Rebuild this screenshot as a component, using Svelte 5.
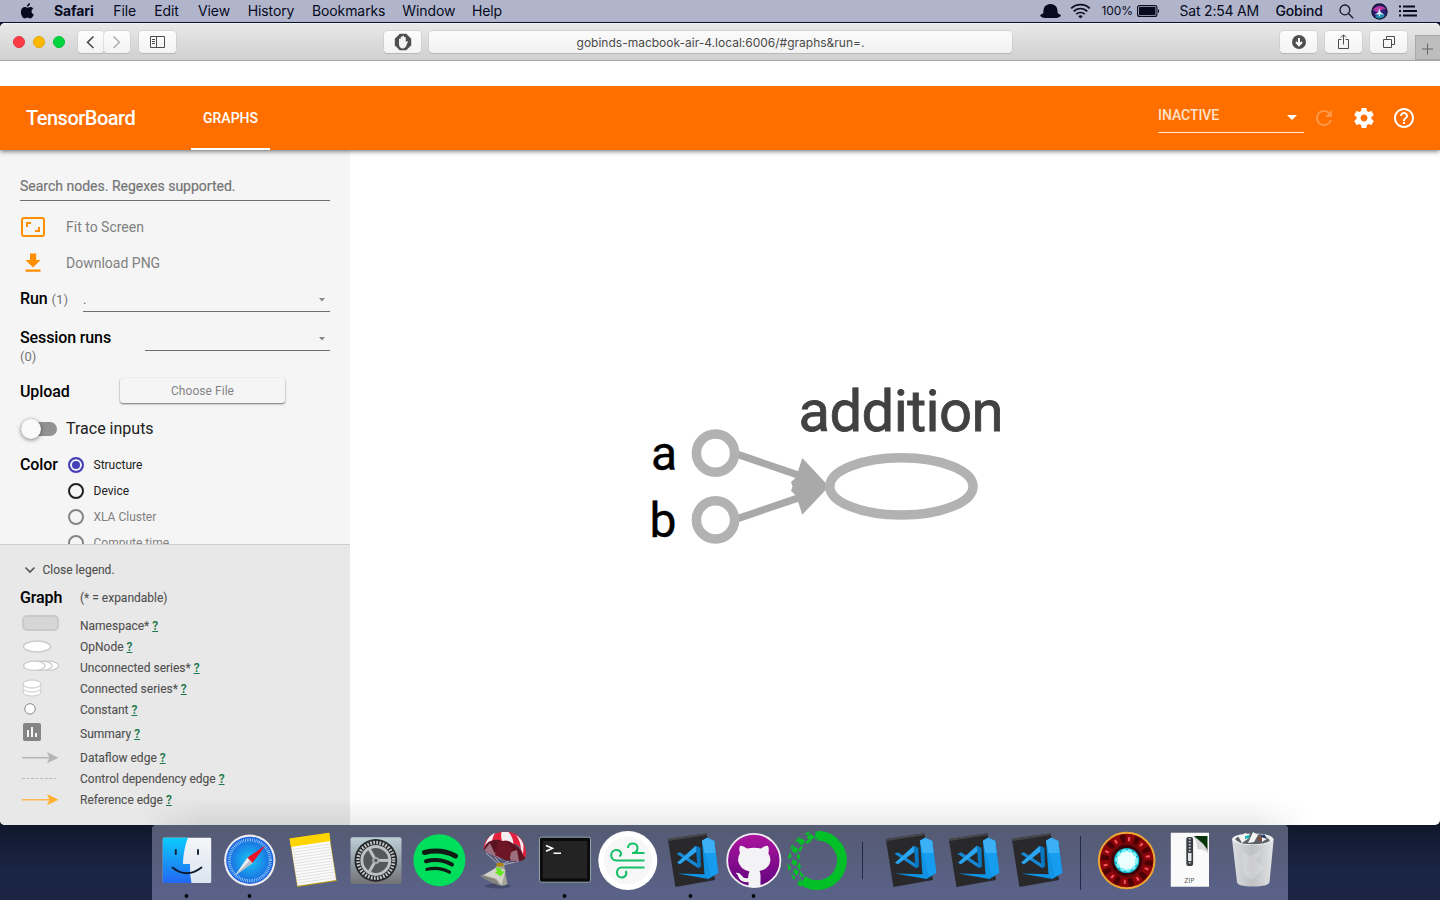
<script>
  const menus = [
    ['Safari', 59.3], ['File', 41], ['Edit', 43.7], ['View', 49.7], ['History', 64.3],
    ['Bookmarks', 90.3], ['Window', 69.7], ['Help', 40]
  ];
  const colors = [
    ['Structure', 'on'], ['Device', ''], ['XLA Cluster', 'off'], ['Compute time', 'off']
  ];
  const legend = [
    ['Namespace*', 'namespace', 21], ['OpNode', 'op', 21], ['Unconnected series*', 'series', 21],
    ['Connected series*', 'stack', 21], ['Constant', 'constant', 21], ['Summary', 'summary', 27],
    ['Dataflow edge', 'flow', 21], ['Control dependency edge', 'control', 21], ['Reference edge', 'reference', 21]
  ];
  const apps = [
    'finder', 'safari', 'notes', 'settings', 'music', 'parachute', 'terminal', 'wind', 'code', 'git', 'ring',
    '|', 'code', 'code', 'code', '||', 'reactor', 'zip', 'trash'
  ];
  const running = [0, 1, 6, 8, 9];
  const spokes = (n) => Array.from({ length: n }, (_, i) => (i * 360) / n);
</script>

{#snippet code()}
  <path d="M8.8 14 47.5 8.2 56 55 16.4 62z" fill="#29292b" />
  <path d="M9 14 47.5 8.2 48 10 9.4 16z" fill="#47474a" />
  <path d="M43 15.7 48.2 12.7 55.2 16 59.3 47.7 49.5 54 18.2 48.6 45.5 49.3z" fill="#0f93e2" />
  <path d="M43 15.7 48.2 12.7 55.2 16 59.3 47.7 52 52z" fill="#169df0" />
  <path d="M48.2 12.7 55.2 16 56.5 28 45.5 28 43 15.7z" fill="#3cb0f4" />
  <path d="M17.500 28.700 21 27.200 41 40.500 39 43z" fill="#1488d5" />
  <path d="M18 37.800 36.700 20.800 41.200 23.200 38.500 26 21 39.300z" fill="#2aa5ef" />
  <path d="M36.700 20.800 41.400 23 42 41.700 38.600 43.200z" fill="#0878c3" />
{/snippet}

<div class="desktop">
  <header class="menubar">
    <svg class="apple" width="15" height="18" viewBox="0 0 15 18"><path d="M10 1c.1 2-1.3 3.700-3 3.700C6.800 3 8.300 1.300 10 1zM7.300 5.700c.7 0 1.500-.8 3-.8 1.300 0 2.400.7 3 1.600-2.600 1.500-2.200 5 .5 6-.7 1.900-2 3.900-3.500 3.900-1.100 0-1.600-.7-2.900-.7s-1.800.7-2.800.7C2.700 16.400.9 12.900.9 10c0-3.200 2-5 4-5 1.100 0 1.900.7 2.400.7z" /></svg>
    {#each menus as [label, width], i}
      <span class="menu" class:bold={i === 0} style="width:{width}px">{label}</span>
    {/each}
    <div class="tray">
      <svg width="21" height="16" viewBox="0 0 21 16"><path d="M.3 12c.9-.8 2.300-1.300 3.100-1.700C2.900 5.500 5 1 10.500 1s7.600 4.500 7.100 9.300c.8.400 2.200.9 3.100 1.700.6 1.500-1.700 2.500-4 3H4.300c-2.300-.5-4.600-1.500-4-3z" /></svg>
      <svg class="wifi" width="21" height="16" viewBox="0 0 21 16"><g fill="none" stroke="#070a20" stroke-width="1.700"><path d="M1.200 5.400a13.500 13.500 0 0 1 18.600 0M3.700 8.300a9.700 9.700 0 0 1 13.600 0M6.300 11.200a6 6 0 0 1 8.400 0" /></g><path d="M8.300 13.300a3.300 3.300 0 0 1 4.400 0L10.500 15.600z" /></svg>
      <span class="percent">100%</span>
      <svg class="battery" width="23" height="12" viewBox="0 0 23 12"><rect x=".6" y=".6" width="19.300" height="10.800" rx="2" fill="none" stroke="#070a20" stroke-width="1.100" /><rect x="2" y="2" width="16.500" height="8" rx=".6" /><path d="M21 4c1.500.5 1.500 3.500 0 4z" /></svg>
      <span class="clock">Sat 2:54 AM</span>
      <span class="user">Gobind</span>
      <svg class="find" width="15" height="15" viewBox="0 0 15 15"><g fill="none" stroke="#15182c" stroke-width="1.300"><circle cx="5.900" cy="5.900" r="4.900" /><path d="m9.500 9.500 4.700 4.700" /></g></svg>
      <svg class="siri" width="17" height="17" viewBox="0 0 17 17"><circle cx="8.500" cy="8.500" r="8.200" fill="#131236" /><circle cx="8.500" cy="8.500" r="6.800" fill="#2a2075" /><path d="M2 7c3-5 10-5 13-1-4 0-5 1-7 4z" fill="#b8359f" /><path d="M4 14c2-1 3-5 4-7 2 3 5 4 6 6-3 3-7 3-10 1z" fill="#1d8cae" /><path d="m8 5 1.500 4 4 3-4-1-1 3-1-3-4 1 4-3z" fill="#dde9ff" /></svg>
      <svg class="list" width="18" height="12" viewBox="0 0 18 12"><path d="M0 .5h2v2H0zM0 5h2v2H0zM0 9.500h2v2H0zM4 .5h12v2H4zM4 5h14v2H4zM4 9.500h14v2H4z" /></svg>
    </div>
  </header>

  <main class="window">
    <div class="toolbar">
      <div class="lights"><i class="red"></i><i class="yellow"></i><i class="green"></i></div>
      <div class="nav">
        <button aria-label="Back"><svg width="26" height="22" viewBox="0 0 26 22"><path d="m15.500 5.500-6 5.800 6 5.700" stroke-width="1.600" /></svg></button>
        <button aria-label="Forward"><svg width="26" height="22" viewBox="0 0 26 22"><path d="m9.500 5.500 6 5.800-6 5.700" class="pale" stroke-width="1.400" /></svg></button>
      </div>
      <button class="wide" aria-label="Sidebar"><svg width="38" height="22" viewBox="0 0 38 22"><path d="M11.500 5.500h14v11h-14zM17.500 5.500v11M13 8.500h3M13 10.500h3M13 12.500h3" stroke-width="1" /></svg></button>
      <button class="wide block" aria-label="Content blocker"><svg width="38" height="22" viewBox="0 0 38 22"><path d="M15.700 2.800h6.600l4.900 4.900v6.600l-4.900 4.900h-6.600l-4.900-4.900V7.700z" class="solid" /><path d="M15 10.500V8q.9-1 1.700 0V6q.9-1 1.700 0V5q.9-1 1.700 0v1.500q.9-1 1.700 0V11l1.400-1q1 .3.500 1.300l-2 4.700q-1.500 2-4.200 1.300-2.500-.8-2.500-3.500z" class="palm" /></svg></button>
      <div class="address"><span>gobinds-macbook-air-4.local:6006/#graphs&amp;run=.</span></div>
      <div class="actions">
        <button class="wide" aria-label="Downloads"><svg width="38" height="22" viewBox="0 0 38 22"><circle cx="19" cy="11" r="7" class="solid" /><path d="M19 7v7m-3-3 3 3.300 3-3.300" class="white" stroke-width="1.900" /></svg></button>
        <button class="wide" aria-label="Share"><svg width="38" height="22" viewBox="0 0 38 22"><path d="M16.500 8.500h-3v9h10v-9h-3M18.500 13.500V4M15.800 6.500l2.700-2.700 2.700 2.700" stroke-width="1" /></svg></button>
        <button class="wide" aria-label="Tabs"><svg width="38" height="22" viewBox="0 0 38 22"><path d="M13.500 8.500h8v8h-8zM16.500 8V5.500h8v8H22" stroke-width="1" /></svg></button>
      </div>
      <div class="plus"><svg width="25" height="25" viewBox="0 0 25 25"><path d="M12.500 7.500v11M7 13h11" /></svg></div>
    </div>

    <div class="blank"></div>

    <div class="appbar">
      <h1>TensorBoard</h1>
      <div class="tab">GRAPHS</div>
      <div class="select"><span>INACTIVE</span><svg width="10" height="5" viewBox="0 0 10 5"><path d="M0 0h10L5 5z" /></svg></div>
      <svg class="tool faded" width="24" height="24" viewBox="0 0 24 24"><path d="M17.650 6.350A7.958 7.958 0 0 0 12 4c-4.420 0-7.990 3.580-7.990 8s3.570 8 7.990 8c3.730 0 6.840-2.550 7.730-6h-2.080A5.990 5.990 0 0 1 12 18c-3.310 0-6-2.690-6-6s2.690-6 6-6c1.660 0 3.140.69 4.220 1.780L13 11h7V4z" /></svg>
      <svg class="tool" width="24" height="24" viewBox="0 0 24 24"><path d="M19.430 12.980c.04-.32.070-.64.070-.98s-.03-.66-.07-.98l2.110-1.650c.19-.15.240-.42.120-.64l-2-3.460c-.12-.22-.39-.3-.61-.22l-2.490 1c-.52-.4-1.080-.73-1.690-.98l-.38-2.650A.488.488 0 0 0 14 2h-4c-.25 0-.46.180-.49.420l-.38 2.650c-.61.250-1.170.59-1.690.98l-2.490-1c-.23-.09-.49 0-.61.220l-2 3.460c-.13.220-.07.490.120.640l2.110 1.650c-.04.320-.07.650-.07.980s.03.660.070.980l-2.110 1.650c-.19.150-.24.420-.12.640l2 3.460c.12.220.39.3.61.220l2.490-1c.52.4 1.080.73 1.690.98l.38 2.650c.03.240.24.420.49.420h4c.25 0 .46-.18.49-.42l.38-2.650c.61-.25 1.170-.59 1.690-.98l2.490 1c.23.09.49 0 .61-.22l2-3.460c.12-.22.07-.49-.12-.64zM12 15.500c-1.930 0-3.500-1.570-3.500-3.500s1.570-3.500 3.500-3.500 3.500 1.570 3.500 3.500-1.570 3.500-3.500 3.500z" /></svg>
      <svg class="tool" width="24" height="24" viewBox="0 0 24 24"><path d="M11 18h2v-2h-2v2zm1-16C6.480 2 2 6.480 2 12s4.480 10 10 10 10-4.480 10-10S17.520 2 12 2zm0 18c-4.410 0-8-3.590-8-8s3.590-8 8-8 8 3.590 8 8-3.590 8-8 8zm0-14c-2.210 0-4 1.790-4 4h2c0-1.100.9-2 2-2s2 .9 2 2c0 2-3 1.750-3 5h2c0-2.250 3-2.500 3-5 0-2.210-1.790-4-4-4z" /></svg>
    </div>

    <div class="body">
      <aside>
        <section class="controls">
          <div class="search">Search nodes. Regexes supported.</div>
          <div class="command"><svg width="26" height="24" viewBox="0 0 26 24"><path d="M4 3h18q2 0 2 2v14q0 2-2 2H4q-2 0-2-2V5q0-2 2-2z" fill="none" stroke="#ff8f00" stroke-width="2" /><path d="M6 12V7h5v2H8v3zM20 12v5h-5v-2h3v-3z" fill="#ff8f00" /></svg><span>Fit to Screen</span></div>
          <div class="command second"><svg width="26" height="24" viewBox="0 0 26 24"><path d="M20.500 9h-4.300V2.500H10V9H5.500l7.500 7.500zM5.500 18.500v2.300h15v-2.300z" fill="#ff8f00" /></svg><span>Download PNG</span></div>
          <div class="field"><b>Run</b><small>(1)</small><div class="picker run"><span>.</span><svg width="6" height="4" viewBox="0 0 6 4"><path d="M0 0h6L3 3.500z" /></svg></div></div>
          <div class="field session"><b>Session runs</b><div class="picker"><svg width="6" height="4" viewBox="0 0 6 4"><path d="M0 0h6L3 3.500z" /></svg></div></div>
          <div class="zero">(0)</div>
          <div class="upload"><b>Upload</b><button>Choose File</button></div>
          <div class="trace"><span class="switch"><i></i></span><span class="label">Trace inputs</span></div>
          <div class="colors"><b>Color</b>
            <div>
              {#each colors as [name, state]}
                <div class="radio {state}"><i></i><span>{name}</span></div>
              {/each}
            </div>
          </div>
        </section>
        <section class="legend">
          <div class="close"><svg width="12" height="8" viewBox="0 0 12 8"><path d="m1.500 1.500 4.500 4.500 4.500-4.500" fill="none" stroke="#555" stroke-width="1.600" /></svg><span>Close legend.</span></div>
          <div class="caption"><b>Graph</b><span>(* = expandable)</span></div>
          {#each legend as [label, icon, height]}
            <div class="entry" style="height:{height}px">
              <svg width="60" height="27" viewBox="0 0 60 27">
                {#if icon === 'namespace'}
                  <rect x="3" y="4" width="35" height="14" rx="4" fill="#d6d6d6" stroke="#c9c9c9" stroke-width="1.800" />
                {:else if icon === 'op'}
                  <ellipse cx="17" cy="13.500" rx="13.600" ry="5.400" fill="#fff" stroke="#ccc" stroke-width="1.500" />
                {:else if icon === 'series'}
                  <g fill="#fff" stroke="#c9c9c9" stroke-width="1.200"><ellipse cx="28" cy="11.800" rx="10.500" ry="4.600" /><ellipse cx="21.500" cy="11.800" rx="10.500" ry="4.600" /><ellipse cx="14.300" cy="11.800" rx="10.700" ry="4.600" /></g>
                {:else if icon === 'stack'}
                  <g fill="#fff" stroke="#c9c9c9"><ellipse cx="12" cy="17" rx="9" ry="4" /><ellipse cx="12" cy="13" rx="9" ry="4" /><ellipse cx="12" cy="9" rx="9" ry="4" /></g>
                {:else if icon === 'constant'}
                  <circle cx="10" cy="12.900" r="5.200" fill="#fff" stroke="#888" />
                {:else if icon === 'summary'}
                  <rect x="3" y="3" width="18" height="18" rx="1.800" fill="#848484" /><path d="M7 10h2v7H7zM11 7h2v10h-2zM15 13h2v4h-2z" fill="#f5f5f5" />
                {:else if icon === 'control'}
                  <path d="M2 13.500h36" stroke="#bbb" stroke-dasharray="3 1.500" />
                {:else}
                  <g class:amber={icon === 'reference'} class="edge"><path d="M2 13.700h28" stroke-width="1.500" /><path d="M27 8 38.500 13.700 27 19.300 29.500 13.700z" class="tip" /></g>
                {/if}
              </svg>
              <span>{label} <u>?</u></span>
            </div>
          {/each}
        </section>
      </aside>
      <svg class="graph" width="1090" height="675" viewBox="350 150 1090 675">
        <path d="M738 454.500 804 477M738 518.500 804 496" stroke="#a9a9a9" stroke-width="7.200" />
        <path d="M802.300 458 828 485.500v2L802.300 514.700 796 495.500 791 491 792.500 486.500 791 482 796 477.500z" fill="#a9a9a9" />
        <g fill="#fff" stroke="#b2b2b2" stroke-width="9.500"><circle cx="715.500" cy="453.200" r="19.100" /><circle cx="715.500" cy="519.800" r="19.100" /><ellipse cx="901.400" cy="486.400" rx="71.600" ry="28.700" /></g>
        <text x="798.500" y="431.400" font-size="58" textLength="205" class="name">addition</text>
        <text x="651" y="469.700" font-size="48" class="leaf">a</text>
        <text x="649.500" y="537" font-size="48" class="leaf">b</text>
      </svg>
      <div class="haze"></div>
    </div>
  </main>

  <footer class="dock">
    {#each apps as app, i}
      {#if app === '|'}
        <div class="gap short"><i></i></div>
      {:else if app === '||'}
        <div class="gap"><i></i></div>
      {:else}
        <svg width="63" height="75" viewBox="0 0 63 75">
          {#if app === 'finder'}
            <defs><linearGradient id="fa" x2="0" y2="1"><stop stop-color="#0bcbfb" /><stop offset="1" stop-color="#2467f3" /></linearGradient><linearGradient id="fb" x2="0" y2="1"><stop stop-color="#f5f6f8" /><stop offset="1" stop-color="#dbe5f0" /></linearGradient></defs>
            <rect x="7.800" y="12.800" width="48.400" height="45.200" rx="1.200" fill="url(#fb)" />
            <path d="M9 12.800h24C30 20 28.300 30 28 39h7q-.5 10 1.500 19H9q-1.200 0-1.200-1.200V14q0-1.200 1.200-1.200z" fill="url(#fa)" />
            <path d="M20.800 25v4M43 25v4" stroke="#16263f" stroke-width="2" stroke-linecap="round" /><path d="M17.500 42.500q14 11.500 29 0" fill="none" stroke="#0c1a2d" stroke-width="1.800" stroke-linecap="round" />
          {:else if app === 'safari'}
            <defs><radialGradient id="sa"><stop stop-color="#18c8f5" /><stop offset="1" stop-color="#1b62df" /></radialGradient></defs>
            <circle cx="31.800" cy="35.300" r="25.700" fill="#ececf0" /><circle cx="31.800" cy="35.300" r="23.600" fill="url(#sa)" />
            <circle cx="31.800" cy="35.300" r="20.500" fill="none" stroke="#b8e6fb" stroke-width="3.200" stroke-dasharray=".6 1.190" />
            <path d="M47.500 20.300 34.500 38 29.300 32.800z" fill="#ec1124" /><path d="M29.300 32.800 34.500 38 17 50.500z" fill="#eee" /><path d="M31.900 35.400 34.500 38 17 50.500z" fill="#b8bcc5" />
          {:else if app === 'notes'}
            <path d="M8.500 13.500 48.200 7.800 55.800 56 16.200 62z" fill="#b69824" /><path d="M9 14 47.700 8.500 55 55 16.500 60.700z" fill="#fbfbfb" />
            <g stroke="#dadada" stroke-width=".8">{#each spokes(13) as _, n}<path d="M{11 + n * .45} {24.500 + n * 2.800} {49.500 + n * .45} {19 + n * 2.800}" />{/each}</g>
            <path d="M8.500 13.500 48.200 7.800 49.500 16 10 22z" fill="#ffd500" />
          {:else if app === 'settings'}
            <defs><linearGradient id="ga" x2="0" y2="1"><stop stop-color="#bdd0d8" /><stop offset="1" stop-color="#727376" /></linearGradient></defs>
            <rect x="6.500" y="12.200" width="51" height="46.800" rx="2" fill="url(#ga)" /><circle cx="31.800" cy="35.400" r="21.300" fill="#222426" />
            <circle cx="31.800" cy="35.400" r="17.800" fill="none" stroke="#c5c8ca" stroke-width="3.500" stroke-dasharray="1.700 1.407" />
            <circle cx="31.800" cy="35.400" r="14" fill="#55575a" stroke="#bec0c2" stroke-width="3" />
            {#each [0, 120, 240] as a}<path d="M32 35.400h14" transform="rotate({a} 31.800 35.400)" stroke="#bdbfc1" stroke-width="3" />{/each}
            <circle cx="31.800" cy="35.400" r="3.500" fill="#aaacaf" /><circle cx="31.800" cy="35.400" r="1.600" fill="#555" />
          {:else if app === 'music'}
            <circle cx="32.400" cy="35.200" r="26" fill="#00df5b" /><g fill="none" stroke="#111b16" stroke-linecap="round"><path d="M17.500 27.500q17-4 31 3.500" stroke-width="5" /><path d="M19 36.300q14-3.500 26 3.300" stroke-width="4" /><path d="M20 44.300q12.500-2.800 22.500 2.800" stroke-width="3.200" /></g>
          {:else if app === 'parachute'}
            <ellipse cx="28" cy="61" rx="13" ry="2.500" fill="#30364f" opacity=".5" />
            <path d="M16 28 28 39M25 32l5 7M49 36l-16 4M39 36l-8 4" stroke="#c2c2d0" stroke-width=".8" />
            <path d="M13.800 24Q18 16 22 15c12-3 26 2 33.500 18q-3 4-7.500 3-4 1.500-8-.5-5 .5-9-3-6 1-9.500-3.500-5 0-7.700-5z" fill="#5c1322" />
            <path d="M14.500 25 20 18l5 11-3 .500Q17 29 14.500 25zM22 30l5-4 4 9-3-2zM41 36l-3-8 9-3 2 11z" fill="#d4b9c8" opacity=".55" />
            <path d="M25 30l3-13 9-1 5 8-3 12-8-3z" fill="#6d1625" />
            <path d="M13.800 24C13.500 13 24 6 37.800 6.700 52 8 58 23 55.500 33Q52 30 51 24q-3-5-7.500-5Q38 14 32 16q-6-3-11 0-5 1.500-7.200 8z" fill="#e4213c" />
            <path d="M17.500 14.500q3-5 7.500-6.500-2 3-3 7.500-4 .5-7 5 .500-3 2.500-6zM31.500 7l7 0Q43 12 43.500 19 38 14 32 16q-1.500-5-.5-9zM46 10q5 3 7.300 9 .5 6-.5 10-1-3-1.800-5-.5-8-5-14z" fill="#f4eef1" />
            <path d="M28 39q3-1.500 6 0 1 9 3.500 20-4 3-9 1-9-3-18-9Q23 48 28 39z" fill="#a5a49c" /><path d="m27.500 42-14 8 13 4 5 6 4-15z" fill="#d3d2cb" /><path d="m11 50 14 4 5 6Q20 58 10.500 51z" fill="#83827c" />
            <path d="M26.500 38.500q4-1.500 7 0v3h-7z" fill="#b18214" />
            <path d="m26 42 5 1.500 .8 3 3-.3-4 5.300-6-4 2-1z" fill="#67e723" />
          {:else if app === 'terminal'}
            <rect x="6.500" y="12.200" width="51" height="45" rx="2" fill="#0a0a0a" stroke="#91a5ad" stroke-width="1" /><rect x="9.700" y="16" width="44.500" height="37.500" fill="#232323" />
            <path d="m13 20.500 6.500 2.800-6.500 3M20.500 28.300h7.500" fill="none" stroke="#fff" stroke-width="1.500" />
          {:else if app === 'wind'}
            <circle cx="31.800" cy="35.500" r="29.500" fill="#fff" /><circle cx="31.800" cy="35.500" r="24" fill="#f7f7f7" /><g fill="none" stroke="#16bf6a" stroke-width="2.100"><path d="M48.500 35.500H20.500c-7 0-7-10.500 0-10.500 5 0 6 6 2.500 6M48.500 28H36M32 23c0-6 9.500-6 9.500 0 0 3-2 5-5.500 5M48.500 42.500H25.500c-6 0-6 10 0 10 4 0 6-4 4-6.500" /></g>
          {:else if app === 'code'}
            {@render code()}
          {:else if app === 'git'}
            <defs><linearGradient id="gh" x2="0" y2="1"><stop stop-color="#ad159f" /><stop offset="1" stop-color="#61047e" /></linearGradient></defs>
            <circle cx="31.800" cy="35.400" r="26.600" fill="url(#gh)" stroke="#f1eef3" stroke-width="1.800" />
            <path d="M18 21q2-1 7 2.500 7-1.500 14 0 5-3.500 7-2.500 1.500 3 .3 7.200Q48.500 31 48.500 35q-1 9-11 11 1.200 2 1 6v9q-6 2-12 0v-4q-8 1-10-5-.8-2.800-3-4 4-1 6.500 3 2 3 6 2 .2-4 1.500-6.500-10-2.500-11.500-11 0-4.500 2-7.500Q16.500 24 18 21z" fill="#f3f3f5" />
          {:else if app === 'ring'}
            <path d="M32.200 10.600a24.700 24.700 0 1 1-14.500 44.700" fill="none" stroke="#03bf28" stroke-width="9.800" />
            <path d="m30.500 6 4 4-4.500 5z" fill="#03bf28" />
            <g fill="#03bf28"><path d="m25 8.500 5 3.500-4 3-4.500-2zM16 13l4 3-3 4.500-4.500-3zM9 21l4 3-1.500 5-5-3zM8 34l4.500 2.500-2 4.500-4-2.500zM10 43.500l4 3-2 4.500-4-4z" /><path d="m19 9 6-3-2 4.500zM9.500 16.500l5-5v4.500zM4.500 25l3-6 1 3zM2.500 34l2.500-7 2 5zM2.500 38l4 5-3 3zM6 48l4.500 4.500-2 3zM12 59l4-6 .5 9z" /><path d="m20 17 4-3 3 2-5 3zM13 25l3-4 2 1-3 5zM11.500 32l2-4 2 4-2 3zM12 42l2-5 2 5-1.500 3zM14.500 51l1-5 4 6z" /></g>
          {:else if app === 'reactor'}
            <circle cx="30.700" cy="35.500" r="27.800" fill="#8c0509" stroke="#eda634" stroke-width="2" />
            <circle cx="30.700" cy="35.500" r="22" fill="none" stroke="#4b0004" stroke-width="8" stroke-dasharray="5 8.820" />
            <circle cx="30.700" cy="35.500" r="21.500" fill="none" stroke="#f4555f" stroke-width="4" stroke-dasharray="2 11.510" stroke-dashoffset="-7.500" />
            <circle cx="30.700" cy="35.500" r="16.300" fill="#3b0006" stroke="#68080f" stroke-width="2" /><circle cx="30.700" cy="35.500" r="12.600" fill="#13b6ce" /><circle cx="30.700" cy="35.500" r="10" fill="#ecffff" stroke="#7df4f7" stroke-width="3" stroke-dasharray="4 2" />
          {:else if app === 'zip'}
            <path d="M11.800 7.800H50v54H11.800z" fill="#fafafa" /><path d="M35 11h13.500V26z" fill="#063409" /><path d="M31 9.500q7 3 7.500 15 7-1 11.500 5-3-12-19-20z" fill="#d7d7da" />
            <rect x="27.300" y="12" width="6.800" height="29" rx="2" fill="#393c42" /><path d="M30.700 13v26" stroke="#c2c6cc" stroke-width="2" stroke-dasharray="1.500 1.500" /><path d="M29 28h3.500v8H29z" fill="#e3e5e6" /><text x="25.300" y="58.300" font-size="7" class="ziptext">ZIP</text>
          {:else if app === 'trash'}
            <defs><linearGradient id="tr"><stop stop-color="#d9dce0" /><stop offset=".5" stop-color="#bfc0c3" /><stop offset="1" stop-color="#e3e4e6" /></linearGradient></defs>
            <path d="M10 14q21-5 41.700 0L47.500 57q-1 4.500-16.500 4.500T15 57z" fill="url(#tr)" /><path d="M10 14Q12 8.500 31 8.500T51.500 14Q49 20 31 20T10 14z" fill="#eceded" />
            <path d="m13 14 7-5 6 3 3-5 5 3 5-1 7 4 2 3q-8 4-22 3-9 0-13-5z" fill="#5d6268" /><path d="m16 11 8-3 3 5-7 5zM31 7l5 3-4 7-6 1zM40 11l6 2-6 4z" fill="#f5f5f3" /><path d="m23 11 5-1-1 3-4 1z" fill="#1ab7bd" /><path d="m36 11 4 3-3 3z" fill="#8f482f" /><path d="m42 9 3 5-6-2z" fill="#223a68" />
            <path d="m20 27 7 4 12-5-5 10 8 7-12 12-8-5z" fill="#e4e4e5" opacity=".35" />
          {/if}
          {#if running.includes(i)}<circle cx="31.500" cy="71" r="1.900" fill="#030409" />{/if}
        </svg>
      {/if}
    {/each}
  </footer>
</div>

<style>
  :global(body) { margin: 0; overflow: hidden; }
  .desktop { width: 1440px; height: 900px; box-sizing: border-box; overflow: hidden; background: linear-gradient(#0a1230 0, #0a1230 820px, #10182c 826px, #1a2444 870px, #1a2342); font-family: Roboto, sans-serif; display: flex; flex-direction: column; }
  .desktop * { box-sizing: border-box; }
  svg { display: block; flex: none; }
  button { font: inherit; padding: 0; }
  .menubar { height: 22px; margin-bottom: 1px; flex: none; background: #b0b5cc; color: #070a20; display: flex; align-items: center; padding-left: 20px; font: 14px/22px Inter, sans-serif; }
  .menubar svg { fill: #070a20; }
  .apple { margin-right: 19px; }
  .menu { flex: none; white-space: nowrap; letter-spacing: -.1px; }
  .bold { font-weight: 700; letter-spacing: -.12px; }
  .tray { margin-left: auto; width: 400.500px; flex: none; display: flex; align-items: center; white-space: nowrap; }
  .wifi { margin-left: 9px; }
  .percent { font-size: 12px; width: 32px; margin-left: 11px; letter-spacing: -.1px; }
  .battery { margin-left: 3px; }
  .clock { width: 80px; margin-left: 20px; letter-spacing: -.2px; }
  .user { width: 48px; margin-left: 16px; font-weight: 500; letter-spacing: -.15px; }
  .find { margin-left: 15px; }
  .siri { margin-left: 17px; }
  .list { margin-left: 11px; }

  .window { height: 802px; flex: none; border-radius: 5px; overflow: hidden; background: #fff; display: flex; flex-direction: column; }
  .toolbar { height: 38px; flex: none; display: flex; align-items: flex-start; padding: 7px 0 0 13px; background: linear-gradient(#e8e8e8, #d0d0d0); border-bottom: 1px solid #a5a5a5; border-top: 1px solid #f3f3f3; }
  .toolbar svg { fill: none; stroke: #4c4c4c; }
  .lights { display: flex; gap: 8px; padding-top: 5px; width: 65px; }
  .lights i { width: 12px; height: 12px; border-radius: 50%; }
  .red { background: #fc3d47; border: 1px solid #e5333e; } .yellow { background: #fdb900; border: 1px solid #e5a400; } .green { background: #00d540; border: 1px solid #00bd35; }
  .nav { display: flex; }
  .toolbar button { height: 22px; width: 26px; border: 0; border-radius: 4px; background: linear-gradient(#fdfdfd, #f3f3f3); box-shadow: 0 0 0 .5px #c5c5c5, 0 1px 0 #aaa; }
  .toolbar button.wide { width: 37px; }
  .toolbar .pale { stroke: #aaa; }
  .nav + .wide { margin-left: 9px; }
  .toolbar button.block { margin-left: 208px; }
  .toolbar .solid { fill: #4f4f4f; stroke: none; }
  .toolbar .palm { fill: #f2f2f2; stroke: none; }
  .toolbar .white { stroke: #fff; }
  .address { margin-left: 8px; width: 583px; height: 22px; border-radius: 4px; background: linear-gradient(#fbfbfb, #f2f2f2); box-shadow: 0 0 0 .5px #c5c5c5, 0 1px 0 #aaa; text-align: center; font: 12px/23px Inter, sans-serif; color: #4a4a4a; }
  .actions { display: flex; gap: 8px; margin-left: 268px; }
  .plus { margin-left: auto; margin-top: 4px; border: 1px solid #a9a9a9; border-right: 0; background: #bdbdbd; width: 25px; height: 25px; }
  .plus svg { stroke: #666; margin-left: -1px; }
  .blank { height: 25px; flex: none; background: #fff; position: relative; z-index: 3; }
  .appbar { height: 64px; flex: none; background: #ff6f00; color: #fff; display: flex; align-items: center; padding-left: 26px; box-shadow: 0 1px 5px rgba(0, 0, 0, .6); position: relative; z-index: 2; }
  h1 { font-size: 20px; font-weight: 500; margin: 0; width: 165px; letter-spacing: -.5px; }
  .tab { width: 79px; height: 64px; line-height: 64px; border-bottom: 2px solid #fff; text-align: center; font-size: 14px; font-weight: 500; }
  .select { margin-left: 888px; width: 146px; height: 34px; margin-bottom: 5px; border-bottom: 1px solid #ffe9d9; font-size: 14px; display: flex; justify-content: space-between; align-items: center; padding-right: 7px; color: #ffe1ca; font-weight: 500; letter-spacing: -.05px; }
  .select svg { fill: #fff; margin-top: 5px; }
  .tool { fill: #fff; margin-left: 16px; }
  .faded { opacity: .28; margin-left: 8px; }

  .body { display: flex; flex: 1; position: relative; }
  aside { width: 350px; height: 675px; flex: none; display: flex; flex-direction: column; background: #f5f5f5; }
  .controls { height: 394px; overflow: hidden; padding: 22px 20px 0; }
  .search { height: 29px; line-height: 29px; border-bottom: 1px solid #6f6f6f; color: #757575; font-size: 14px; -webkit-text-stroke: .2px; }
  .command { height: 36px; margin-top: 8px; display: flex; align-items: center; color: #808080; font-size: 14px; }
  .command.second { margin-top: 0; }
  .command span { margin-left: 20px; }
  b { font-size: 16px; font-weight: 500; color: #000; letter-spacing: -.12px; white-space: nowrap; }
  .field { height: 36px; display: flex; align-items: center; }
  .field b, .caption b { margin-top: -1px; }
  .field small { font-size: 13.300px; color: #757575; margin-left: 4px; }
  .picker { margin-left: auto; width: 185px; height: 24px; border-bottom: 1px solid #6f6f6f; margin-bottom: -2px; display: flex; align-items: center; justify-content: flex-end; padding-right: 5px; fill: #888; }
  .picker.run { width: 247px; justify-content: space-between; font-size: 13px; color: #666; }
  .session { margin-top: 3px; }
  .zero { height: 18px; line-height: 18px; margin-top: -8px; font-size: 13px; color: #757575; }
  .upload { height: 28px; margin-top: 11px; display: flex; align-items: center; }
  .upload b { width: 100px; }
  .upload button { width: 165px; height: 25px; border: 0; border-radius: 3px; background: #f5f5f5; color: #858585; box-shadow: 0 1px 2px rgba(0, 0, 0, .55); font-size: 12px; letter-spacing: .05px; margin-top: -1px; }
  .trace { height: 37px; margin-top: 5px; display: flex; align-items: center; font-size: 16px; color: #212121; }
  .switch { width: 36px; height: 14px; border-radius: 7px; margin-left: 1px; background: #929292; display: flex; align-items: center; }
  .switch i { width: 20px; height: 20px; flex: none; border-radius: 50%; background: #fafafa; box-shadow: 0 1px 4px rgba(0, 0, 0, .5); }
  .label { margin-left: 9px; }
  .colors { display: flex; margin-top: 5px; }
  .colors b { width: 48px; line-height: 26px; }
  .radio { height: 26px; display: flex; align-items: center; font-size: 12px; color: #212121; }
  .radio i { width: 16px; height: 16px; border: 2px solid #212121; border-radius: 50%; margin-right: 9.500px; }
  .radio.on i { border-color: #4540b8; background: #4540b8; box-shadow: inset 0 0 0 2px #f5f5f5; }
  .radio.off { color: #808080; }
  .radio.off i { border-color: #858585; }
  .legend { height: 281px; border-top: 1px solid #ccc; background: #e8e8e8; padding: 12px 20px 0; color: #4f4f4f; font-size: 12px; -webkit-text-stroke: .1px; }
  .close { height: 26px; display: flex; align-items: center; gap: 6.500px; padding-left: 4px; }
  .caption { height: 30px; display: flex; align-items: center; }
  .caption b { width: 60px; }
  .entry { display: flex; align-items: center; }
  .entry:nth-child(3) { margin-top: 2px; }
  .entry u { color: #18764a; font-weight: 500; }
  .edge path { stroke: #b5b5b5; } .edge .tip { fill: #b5b5b5; stroke: none; }
  .amber path { stroke: #ffb74d; } .amber .tip { fill: #ffb02e; }
  .graph { font-family: Roboto, sans-serif; }
  .name { fill: #414141; stroke: #414141; stroke-width: .8; }
  .leaf { fill: #000; stroke: #000; stroke-width: .4; }
  .haze { position: absolute; left: 140px; right: 130px; bottom: 0; height: 28px; background: linear-gradient(transparent, rgba(0, 0, 0, .08)); -webkit-mask-image: linear-gradient(90deg, transparent, #000 60px, #000 calc(100% - 60px), transparent); mask-image: linear-gradient(90deg, transparent, #000 60px, #000 calc(100% - 60px), transparent); }
  .dock { width: 1136px; height: 75px; flex: none; margin: 0 auto; padding-left: 3px; display: flex; background: linear-gradient(#555b72, #5a628a); border-radius: 4px 4px 0 0; }
  .gap { width: 29.500px; height: 75px; display: flex; justify-content: center; align-items: center; }
  .gap i { width: 1px; height: 54px; background: #20294b; }
  .gap.short { width: 29px; } .gap.short i { height: 37px; margin-top: -5px; }
  .ziptext { font-family: "Open Sans", sans-serif; fill: #555; }
</style>
